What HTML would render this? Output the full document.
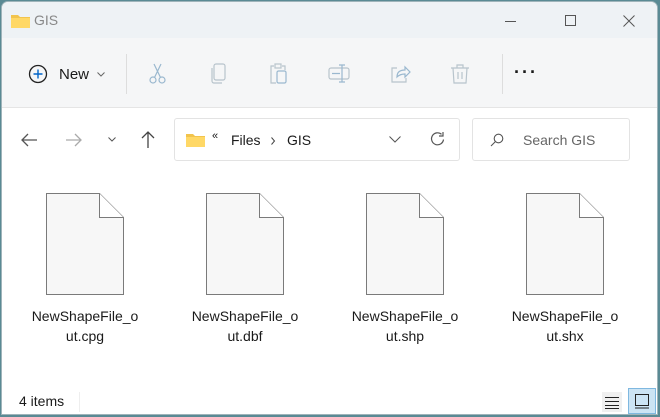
<!DOCTYPE html>
<html><head><meta charset="utf-8"><style>
*{margin:0;padding:0;box-sizing:border-box}
body{width:660px;height:417px;background:#5a8a94;font-family:"Segoe UI","Liberation Sans",sans-serif;overflow:hidden;position:relative}
.win{position:absolute;left:1px;top:1px;width:657px;height:414px;background:#fff;border-radius:7px 7px 0 0;overflow:hidden;border:1px solid #9fb4ba}
.title{position:absolute;left:0;top:0;width:100%;height:36px;background:#eef2f5}
.tb{position:absolute;left:0;top:36px;width:100%;height:70px;background:#f5f6f7;border-bottom:1px solid #e5e5e5}
.t{position:absolute;color:#1a1a1a;font-size:14px;white-space:nowrap}
.box{position:absolute;border:1px solid #e3e3e3;background:#fff;border-radius:3px}
.file{position:absolute;top:190px;width:80px}
.lbl{position:absolute;top:304px;width:140px;text-align:center;font-size:14px;line-height:20px;color:#1a1a1a}
</style></head><body>
<div class="win">
<div class="title"></div>
<div class="tb"></div>
<svg style="position:absolute;left:9px;top:11px" width="19" height="15"><path d="M0 2h7l2 2h10v11H0z" fill="#f2c44d"/><path d="M0 5h19v10H0z" fill="#ffd866"/></svg>
<div class="t" style="left:32px;top:10px;color:#888">GIS</div>
<div style="position:absolute;left:503px;top:19px;width:11px;height:1px;background:#555"></div>
<div style="position:absolute;left:563px;top:13px;width:11px;height:11px;border:1px solid #555"></div>
<svg style="position:absolute;left:621px;top:13px" width="12" height="12"><path d="M0.5 0.5L11.5 11.5M11.5 0.5L0.5 11.5" stroke="#555"/></svg>
<svg style="position:absolute;left:26px;top:62px" width="20" height="20"><circle cx="10" cy="10" r="8.5" fill="none" stroke="#222" stroke-width="1.3"/><path d="M10 5.5v9M5.5 10h9" stroke="#0064c8" stroke-width="1.4"/></svg>
<div class="t" style="left:57px;top:64px;font-size:15px">New</div>
<svg style="position:absolute;left:95px;top:70px" width="8" height="5"><path d="M0.5 0.5l3.5 3.5 3.5-3.5" stroke="#666" fill="none"/></svg>
<div style="position:absolute;left:124px;top:52px;width:1px;height:40px;background:#ddd"></div>
<div style="position:absolute;left:500px;top:52px;width:1px;height:40px;background:#ddd"></div>
<svg style="position:absolute;left:146px;top:61px" width="20" height="22" fill="none" stroke="#9ab8cf" stroke-width="1.2"><circle cx="5" cy="17" r="3"/><circle cx="14" cy="17" r="3"/><path d="M6.5 14.5L13 1M12.5 14.5L6 1"/></svg>
<svg style="position:absolute;left:207px;top:61px" width="20" height="22" fill="none" stroke="#b8c4cc" stroke-width="1.2"><rect x="5" y="1" width="11" height="16" rx="2"/><path d="M3 5v13a2 2 0 0 0 2 2h8"/></svg>
<svg style="position:absolute;left:266px;top:61px" width="22" height="22" fill="none" stroke="#b8c4cc" stroke-width="1.2"><path d="M6 3H3v17h5M14 3h3v4"/><rect x="7" y="1" width="6" height="4"/><rect x="9" y="8" width="9" height="12" rx="1.5" stroke="#9ab8cf"/></svg>
<svg style="position:absolute;left:326px;top:61px" width="24" height="22" fill="none" stroke="#b8c4cc" stroke-width="1.2"><rect x="1" y="5" width="20" height="11" rx="2"/><path d="M14 2v17M11 2h6M11 19h6M4 10.5h8" stroke="#9ab8cf"/></svg>
<svg style="position:absolute;left:387px;top:61px" width="22" height="22" fill="none" stroke="#b8c4cc" stroke-width="1.2"><path d="M8 5H3v14h14v-4"/><path d="M8 14c0-5 3-7 8-7V4l5 5-5 5v-3c-4 0-6 1-8 3z" stroke="#9ab8cf"/></svg>
<svg style="position:absolute;left:447px;top:61px" width="22" height="22" fill="none" stroke="#b8c4cc" stroke-width="1.2"><path d="M2 5h18M8 5V2h6v3M4 5l1 15h12l1-15M9 9v7M13 9v7"/></svg>
<div class="t" style="left:512px;top:60px;font-size:18px;letter-spacing:2px;font-weight:bold">···</div>
<svg style="position:absolute;left:18px;top:130px" width="18" height="16" fill="none" stroke="#555" stroke-width="1.3"><path d="M17 8H2M8 2L2 8l6 6"/></svg>
<svg style="position:absolute;left:63px;top:130px" width="18" height="16" fill="none" stroke="#aaa" stroke-width="1.3"><path d="M1 8h15M10 2l6 6-6 6"/></svg>
<svg style="position:absolute;left:106px;top:135px" width="8" height="5"><path d="M0.5 0.5l3.5 3.5 3.5-3.5" stroke="#555" fill="none"/></svg>
<svg style="position:absolute;left:138px;top:128px" width="16" height="19" fill="none" stroke="#444" stroke-width="1.3"><path d="M8 18V2M2 8l6-6 6 6"/></svg>
<div class="box" style="left:172px;top:116px;width:286px;height:43px"></div>
<svg style="position:absolute;left:184px;top:131px" width="19" height="15"><path d="M0 1h7l2 2h10v11H0z" fill="#f2c44d"/><path d="M0 4h19v10H0z" fill="#ffd866"/></svg>
<div class="t" style="left:210px;top:128px;font-size:11px">«</div>
<div class="t" style="left:229px;top:130px">Files</div>
<svg style="position:absolute;left:269px;top:135px" width="5" height="8"><path d="M0.5 0.5l3 3.5-3 3.5" stroke="#444" fill="none"/></svg>
<div class="t" style="left:285px;top:130px">GIS</div>
<svg style="position:absolute;left:387px;top:134px" width="12" height="7"><path d="M0.5 0.5l5.5 5.5 5.5-5.5" stroke="#555" fill="none"/></svg>
<svg style="position:absolute;left:427px;top:129px" width="17" height="17" fill="none" stroke="#555" stroke-width="1.2"><path d="M14.5 8.5a6 6 0 1 1-2-5.2M14 1v4h-4"/></svg>
<div class="box" style="left:470px;top:116px;width:158px;height:43px"></div>
<svg style="position:absolute;left:488px;top:131px" width="14" height="14" fill="none" stroke="#555" stroke-width="1.1"><circle cx="8.5" cy="5.5" r="4.3"/><path d="M5.5 8.5L1 13"/></svg>
<div class="t" style="left:521px;top:130px;color:#666">Search GIS</div>

<svg class="file" style="left:43px" width="80" height="104"><path d="M1.5 1.5h53l24 24v77h-77z" fill="#f7f7f7" stroke="#7a7a7a"/><path d="M54.5 1.5v24h24" fill="#fff" stroke="#7a7a7a"/></svg>
<svg class="file" style="left:203px" width="80" height="104"><path d="M1.5 1.5h53l24 24v77h-77z" fill="#f7f7f7" stroke="#7a7a7a"/><path d="M54.5 1.5v24h24" fill="#fff" stroke="#7a7a7a"/></svg>
<svg class="file" style="left:363px" width="80" height="104"><path d="M1.5 1.5h53l24 24v77h-77z" fill="#f7f7f7" stroke="#7a7a7a"/><path d="M54.5 1.5v24h24" fill="#fff" stroke="#7a7a7a"/></svg>
<svg class="file" style="left:523px" width="80" height="104"><path d="M1.5 1.5h53l24 24v77h-77z" fill="#f7f7f7" stroke="#7a7a7a"/><path d="M54.5 1.5v24h24" fill="#fff" stroke="#7a7a7a"/></svg>
<div class="lbl" style="left:13px">NewShapeFile_o<br>ut.cpg</div>
<div class="lbl" style="left:173px">NewShapeFile_o<br>ut.dbf</div>
<div class="lbl" style="left:333px">NewShapeFile_o<br>ut.shp</div>
<div class="lbl" style="left:493px">NewShapeFile_o<br>ut.shx</div>
<div class="t" style="left:17px;top:391px">4 items</div>
<div style="position:absolute;left:77px;top:390px;width:1px;height:20px;background:#eee"></div>
<div style="position:absolute;left:600px;top:390px;width:20px;height:20px;background:#f0f0f0"></div>
<svg style="position:absolute;left:603px;top:393px" width="14" height="14"><path d="M0 2.5h14M0 6.5h14M0 10.5h14M0 13.5h14" stroke="#222"/></svg>
<div style="position:absolute;left:626px;top:386px;width:28px;height:26px;background:#cce4f4;border:1px solid #7fb8e0"></div>
<svg style="position:absolute;left:632px;top:392px" width="16" height="15" fill="none" stroke="#222"><rect x="1.5" y="0.5" width="13" height="11"/><path d="M1 14h14"/></svg>
</div>
</body></html>
